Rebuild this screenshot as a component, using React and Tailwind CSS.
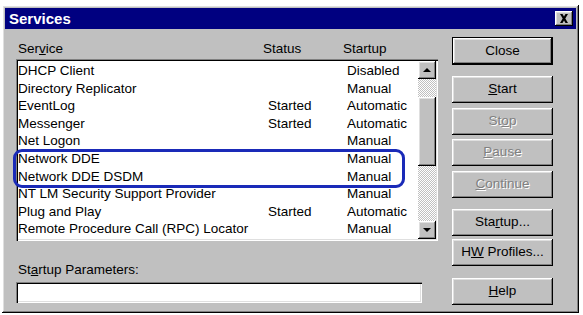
const RAISED =
  "shadow-[inset_-1px_-1px_0_#000,inset_1px_1px_0_#fff,inset_-2px_-2px_0_#808080,inset_2px_2px_0_#dfdfdf]";
const SUNKEN =
  "shadow-[inset_1px_1px_0_#808080,inset_2px_2px_0_#000,inset_-1px_-1px_0_#fff,inset_-2px_-2px_0_#dfdfdf]";
const DITHER =
  "bg-[repeating-conic-gradient(#c0c0c0_0_25%,#ffffff_0_50%)] bg-[length:2px_2px]";

const SERVICES = [
  ["DHCP Client", "", "Disabled"],
  ["Directory Replicator", "", "Manual"],
  ["EventLog", "Started", "Automatic"],
  ["Messenger", "Started", "Automatic"],
  ["Net Logon", "", "Manual"],
  ["Network DDE", "", "Manual"],
  ["Network DDE DSDM", "", "Manual"],
  ["NT LM Security Support Provider", "", "Manual"],
  ["Plug and Play", "Started", "Automatic"],
  ["Remote Procedure Call (RPC) Locator", "", "Manual"],
];

function Btn({ children, disabled, className = "" }) {
  return (
    <div
      className={`flex items-center justify-center w-full ${RAISED} ${
        disabled ? "text-[#808080] [text-shadow:1px_1px_0_#fff]" : "text-black"
      } ${className}`}
    >
      <span className="whitespace-pre">{children}</span>
    </div>
  );
}

function Arrow({ down }) {
  return (
    <div className={`w-full h-[18px] bg-[#c0c0c0] flex items-center justify-center ${RAISED}`}>
      {down ? (
        <div className="w-0 h-0 border-x-[4px] border-x-transparent border-t-[4px] border-t-black" />
      ) : (
        <div className="w-0 h-0 border-x-[4px] border-x-transparent border-b-[4px] border-b-black" />
      )}
    </div>
  );
}

export default function App() {
  return (
    <div
      className="relative w-[583px] h-[315px] bg-white overflow-hidden text-[13.5px] text-black"
      style={{ fontFamily: '"Liberation Sans", Arial, sans-serif' }}
    >
      <div className={`ml-[2px] mt-[5px] w-[577px] h-[308px] bg-[#c0c0c0] p-[3px] ${RAISED}`}>
        {/* title bar */}
        <div className="h-[21px] bg-[#000080] flex items-center justify-between pl-[4px] pr-[3px]">
          <span className="text-white font-bold text-[15px] leading-none">Services</span>
          <div className={`w-[18px] h-[15px] bg-[#c0c0c0] flex items-center justify-center ${RAISED}`}>
            <svg width="10" height="9" viewBox="0 0 10 9">
              <path d="M1 0h2.5L5 2.6 6.5 0H9L6.3 4.5 9 9H6.5L5 6.4 3.5 9H1l2.7-4.5z" fill="#000" />
            </svg>
          </div>
        </div>

        <div className="flex pl-[11px]">
          {/* left column */}
          <div className="w-[422px] pt-[12px]">
            <div className="flex h-[15px] leading-[15px] pl-[2px]">
              <span className="w-[245px]">
                Ser<u>v</u>ice
              </span>
              <span className="w-[80px]">Status</span>
              <span>Startup</span>
            </div>

            <div className={`mt-[3px] h-[182px] bg-white flex p-[2px] ${SUNKEN}`}>
              <div className="flex-1 pt-[1px]">
                {SERVICES.map(([name, status, startup]) => (
                  <div key={name} className="flex h-[17.6px] leading-[17.6px] whitespace-nowrap">
                    <span className="w-[250px]">{name}</span>
                    <span className="w-[79px]">{status}</span>
                    <span>{startup}</span>
                  </div>
                ))}
              </div>
              <div className="w-[18px] flex flex-col">
                <Arrow />
                <div className={`h-[18px] ${DITHER}`} />
                <div className={`h-[69px] bg-[#c0c0c0] ${RAISED}`} />
                <div className={`flex-1 ${DITHER}`} />
                <Arrow down />
              </div>
            </div>

            <div className="mt-[21px] h-[15px] leading-[15px] pl-[2px]">
              St<u>a</u>rtup Parameters:
            </div>
            <div className={`mt-[5px] w-[406px] h-[21px] bg-white ${SUNKEN}`} />
          </div>

          {/* right column */}
          <div className="ml-[14px] w-[101px] pt-[8px] flex flex-col">
            <div className="border border-black h-[28px] flex">
              <Btn className="h-full">Close</Btn>
            </div>
            <Btn className="mt-[11px] h-[27px]">
              <u>S</u>tart
            </Btn>
            <Btn disabled className="mt-[5px] h-[27px]">
              St<u>o</u>p
            </Btn>
            <Btn disabled className="mt-[4px] h-[27px]">
              <u>P</u>ause
            </Btn>
            <Btn disabled className="mt-[5px] h-[27px]">
              <u>C</u>ontinue
            </Btn>
            <Btn className="mt-[11px] h-[27px]">
              Sta<u>r</u>tup...
            </Btn>
            <Btn className="mt-[3px] h-[27px]">
              H<u>W</u>{" "}Profiles...
            </Btn>
            <Btn className="mt-[12px] h-[27px]">
              <u>H</u>elp
            </Btn>
          </div>
        </div>
      </div>

      {/* annotation highlight */}
      <div className="absolute left-[13px] top-[149px] w-[392px] h-[39px] border-[3px] border-[#1a2ab8] rounded-[9px]" />
    </div>
  );
}
